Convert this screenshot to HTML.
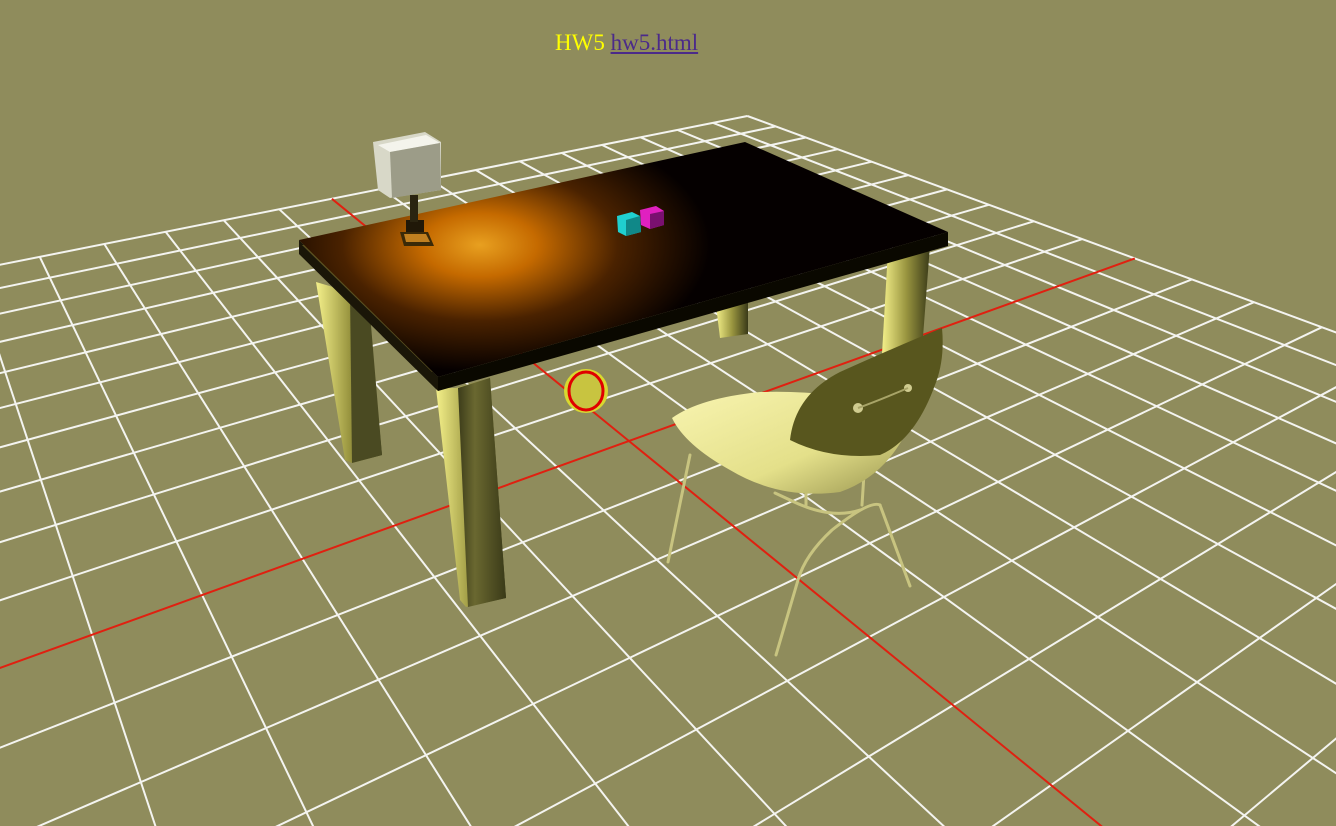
<!DOCTYPE html>
<html><head><meta charset="utf-8">
<style>
html,body{margin:0;padding:0;width:1336px;height:826px;overflow:hidden;background:#8f8c5c;}
#t{position:absolute;top:30px;left:555px;white-space:nowrap;font:23px "Liberation Serif",serif;color:#ffff00;}
#t a{color:#4b2a8a;text-decoration:underline;}
svg{position:absolute;left:0;top:0;display:block;}
</style></head><body>
<svg id="s" width="1336" height="826" viewBox="0 0 1336 826">
<defs>
<radialGradient id="glow" cx="480" cy="245" r="230" gradientUnits="userSpaceOnUse" gradientTransform="translate(480 245) scale(1 0.55) translate(-480 -245)">
<stop offset="0" stop-color="#e8a020"/><stop offset="0.25" stop-color="#c56a00"/><stop offset="0.6" stop-color="#4a2200"/><stop offset="1" stop-color="#050000"/>
</radialGradient>
<linearGradient id="leg" x1="0" x2="1"><stop offset="0" stop-color="#f4f08a"/><stop offset="0.5" stop-color="#9a9640"/><stop offset="1" stop-color="#3a3a18"/></linearGradient>
<linearGradient id="leg2" x1="0" x2="1"><stop offset="0" stop-color="#3c3c1a"/><stop offset="0.35" stop-color="#6a6830"/><stop offset="1" stop-color="#3a3a18"/></linearGradient>
<linearGradient id="seat" x1="0" y1="0" x2="1" y2="1"><stop offset="0" stop-color="#f8f4b0"/><stop offset="0.6" stop-color="#e4e08a"/><stop offset="1" stop-color="#9a9650"/></linearGradient>
</defs>
<g id="grid"></g>
<polygon points="716,305 748,300 748,334 720,338" fill="url(#leg)"/>
<polygon points="888,250 930,245 922,350 882,354" fill="url(#leg)"/>
<polygon points="316,282 350,292 366,290 382,455 352,463 345,460" fill="url(#leg)"/>
<polygon points="350,292 368,290 382,455 352,463" fill="#4a4a22"/>
<polygon points="436,388 456,388 490,378 506,598 466,607 460,600" fill="url(#leg)"/>
<polygon points="458,388 490,378 506,598 468,607" fill="url(#leg2)"/>
<polygon points="299,240 438,377 438,391 299,254" fill="#1a1608"/>
<polygon points="438,377 948,232 948,246 438,391" fill="#0a0800"/>
<polygon points="302,245 312,245 440,372 432,372" fill="#5a5020"/>
<polygon points="299,240 745,142 948,232 438,377" fill="url(#glow)"/>
<polygon points="400,232 428,232 434,246 404,246" fill="#3a2a08"/>
<polygon points="404,234 426,234 430,242 406,242" fill="#c08020"/>
<rect x="406" y="220" width="18" height="12" fill="#201808"/>
<rect x="410" y="195" width="8" height="27" fill="#2a2410"/>
<polygon points="373,142 425,132 441,142 441,190 390,198 378,190" fill="#d8d8c8"/>
<polygon points="378,145 426,135 440,143 390,152" fill="#f4f4ec"/>
<polygon points="390,152 440,143 441,190 392,198" fill="#9c9c88"/>
<polygon points="617,216 632,212 640,216 641,232 626,236 618,232" fill="#20d0d0"/>
<polygon points="626,220 640,216 641,232 626,236" fill="#108888"/>
<polygon points="640,210 656,206 664,211 664,225 650,229 641,225" fill="#e020c0"/>
<polygon points="650,214 664,211 664,225 650,229" fill="#7a1070"/>
<circle cx="586" cy="391" r="22" fill="#d8d830"/>
<ellipse cx="586" cy="391" rx="17" ry="19" fill="#c8c440" stroke="#e00000" stroke-width="3"/>
<g stroke="#c8c480" stroke-width="3" fill="none" stroke-linecap="round">
<path d="M690 455 L668 562"/>
<path d="M775 493 L790 500 Q830 520 860 510"/>
<path d="M880 505 Q870 500 832 530 Q805 555 798 580 L776 655"/>
<path d="M880 505 L910 586"/>
<path d="M806 480 L806 505"/>
<path d="M870 380 L862 505"/>
</g>
<path d="M672 418 Q700 398 760 392 Q830 390 880 405 Q905 420 902 440 Q880 478 840 492 Q780 500 730 470 Q685 445 672 418 Z" fill="url(#seat)"/>
<path d="M790 440 Q795 395 840 372 Q900 345 942 328 Q945 360 935 385 Q915 440 880 455 Q830 460 790 440 Z" fill="#58561e"/>
<circle cx="858" cy="408" r="5" fill="#d0cc90"/>
<circle cx="908" cy="388" r="4" fill="#d0cc90"/>
<path d="M858 408 Q880 400 908 388" stroke="#a8a468" stroke-width="2" fill="none"/>
</svg>
<div id="t">HW5 <a>hw5.html</a></div>
<script>
(function(){
var O=[629,441],VA=[2491,-231],VB=[-194,-230],su=0.0373,sv=0.0565;
function P(u,v){var a=su*u,b=sv*v,d=1+a+b;return[(O[0]+a*VA[0]+b*VB[0])/d,(O[1]+a*VA[1]+b*VB[1])/d];}
var g=document.getElementById('grid'),h='';
function line(p,q,c){h+='<line x1="'+p[0].toFixed(1)+'" y1="'+p[1].toFixed(1)+'" x2="'+q[0].toFixed(1)+'" y2="'+q[1].toFixed(1)+'" stroke="'+c+'" stroke-width="2"/>';}
var vmin=-9.3,umin=-9.3;
for(var i=-10;i<=10;i++){
 if(i!==0){line(P(i,vmin),P(i,10),'#f4f4f0');line(P(umin,i),P(10,i),'#f4f4f0');}
}
line(P(0,vmin),P(0,10),'#e02010');line(P(umin,0),P(10,0),'#e02010');
g.innerHTML=h;
})();
</script>
</body></html>
